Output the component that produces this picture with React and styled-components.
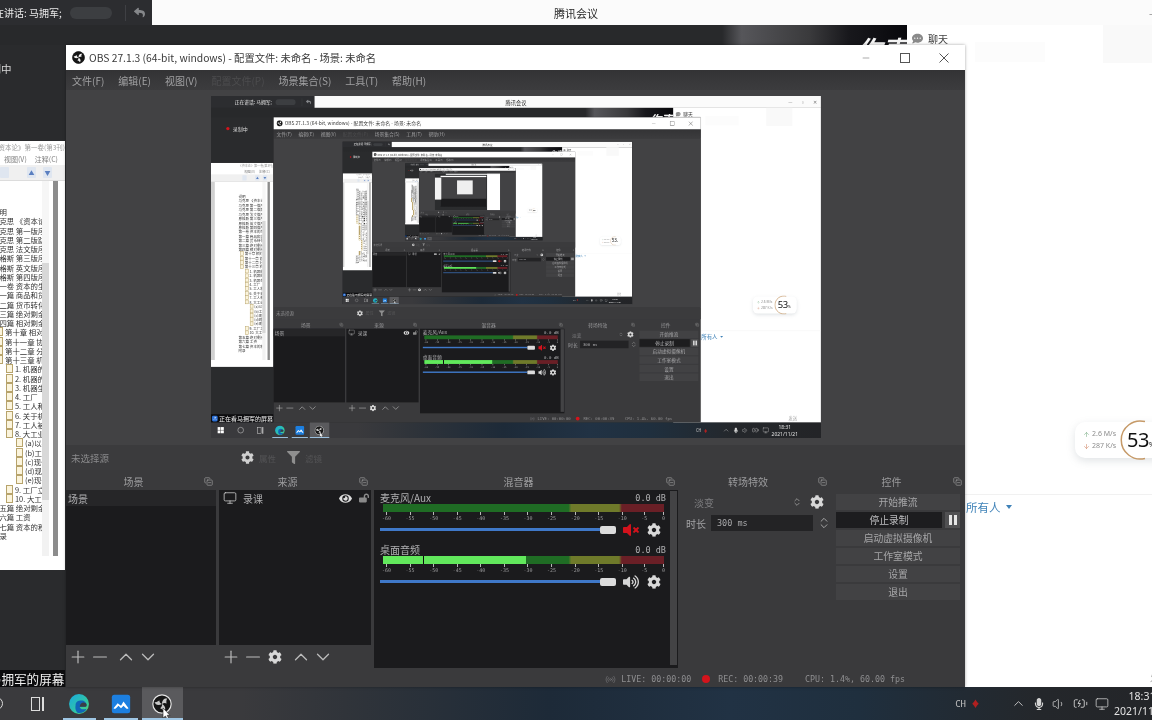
import React from "react";
import styled, { createGlobalStyle } from "styled-components";
import {
  FaCog,
  FaEye,
  FaLockOpen,
  FaVolumeUp,
  FaVolumeMute,
  FaCommentDots,
  FaFilter,
  FaReply,
  FaMicrophone,
} from "react-icons/fa";
import {
  Plus,
  Minus,
  ChevronUp,
  ChevronDown,
  Monitor,
  Volume1,
  BatteryCharging,
  CopyMinus,
  ArrowUp,
  ArrowDown,
  ChevronsUpDown,
  Radio,
  User,
} from "lucide-react";

const cjk = `"Noto Sans CJK SC", "Noto Sans", sans-serif`;
const MAX_DEPTH = 3;

const GlobalStyle = createGlobalStyle`
  html, body {
    margin: 0;
    background: #2b2c2e;
    overflow: hidden;
    font-family: ${cjk};
  }
`;

const Viewport = styled.div`
  width: 1152px;
  height: 720px;
  overflow: hidden;
`;

const Canvas = styled.div`
  position: relative;
  width: 1284px;
  height: 720px;
  display: flex;
  flex-direction: column;
  overflow: hidden;
  flex: none;
  background: #2b2c2e;
  margin-left: ${(p) => (p.$nested ? 0 : "-66px")};
  filter: blur(${(p) => (p.$nested ? "0.8px" : "0.6px")});
  transform: ${(p) => (p.$nested ? "scale(0.475)" : "none")};
  transform-origin: 0 0;
`;

/* meeting title row */
const TitleRow = styled.header`
  display: flex;
  height: 25px;
  flex: none;
`;
const MeetingBar = styled.div`
  width: 218px;
  display: flex;
  align-items: center;
  padding-left: 50px;
  box-sizing: border-box;
  background: #2c2d30;
  color: #e8e8e8;
  font-size: 10px;
  white-space: nowrap;
  overflow: hidden;
`;
const Ghost = styled.span`
  width: 42px;
  height: 12px;
  margin-left: 8px;
  border-radius: 6px;
  background: #3c3e41;
  flex: none;
`;
const BarDivider = styled.span`
  width: 1px;
  height: 16px;
  margin: 0 8px 0 13px;
  background: #3f4044;
  flex: none;
`;
const BackArrow = styled(FaReply)`
  color: #85878a;
  font-size: 11px;
  flex: none;
`;
const AppTitle = styled.div`
  position: relative;
  flex: 1;
  display: flex;
  align-items: center;
  justify-content: center;
  padding-right: 218px;
  background: #fbfbfb;
  color: #2a2a2a;
  font-size: 11px;
`;
const WinControls = styled.div`
  position: absolute;
  right: 8px;
  top: 0;
  height: 25px;
  display: flex;
  align-items: center;
  gap: 17px;
  color: #777;
  font-size: 10px;
`;

/* meeting main area */
const Main = styled.div`
  flex: 1;
  display: flex;
  min-height: 0;
`;
const Stage = styled.section`
  flex: 1;
  display: flex;
  flex-direction: column;
  background: #2a2b2d;
`;
const Stripe = styled.div`
  position: relative;
  height: 20px;
  overflow: hidden;
  background: linear-gradient(
    90deg,
    #28292b 0 81%,
    #56565a 83%,
    #4a4a4d 86%,
    #3a3a3c 90%,
    #18181c 94%,
    #08080c 100%
  );
`;
const SpeakerMark = styled.span`
  position: absolute;
  right: 0;
  top: 8px;
  color: #f4f4f4;
  font-size: 25px;
  line-height: 30px;
  font-style: italic;
  font-weight: 700;
`;
const RecordBadge = styled.div`
  display: flex;
  align-items: center;
  gap: 7px;
  margin: 16px 0 0 32px;
  color: #d8d8d8;
  font-size: 10.5px;
`;
const RedDot = styled.span`
  width: ${(p) => p.$size || 7}px;
  height: ${(p) => p.$size || 7}px;
  border-radius: 50%;
  background: #d4141c;
  flex: none;
`;

/* chat column */
const Chat = styled.aside`
  position: relative;
  width: 311px;
  display: flex;
  flex-direction: column;
  background: #fff;
`;
const ChatHeader = styled.div`
  position: relative;
  height: 40px;
  flex: none;
`;
const ChatTab = styled.div`
  display: inline-flex;
  align-items: center;
  gap: 5px;
  height: 19px;
  margin-left: 5px;
  padding: 0 2px 0 0;
  border-bottom: 1px solid #c8c8c8;
  color: #444;
  font-size: 10px;
  svg {
    color: #8a8a8a;
    font-size: 11px;
  }
`;
const HeaderGhost = styled.span`
  position: absolute;
  top: ${(p) => p.$top}px;
  left: ${(p) => p.$left}px;
  width: ${(p) => p.$width}px;
  height: ${(p) => p.$height}px;
  background: ${(p) => p.$fill};
`;
const ChatBody = styled.div`
  flex: 1;
`;
const Compose = styled.div`
  position: relative;
  height: 193px;
  flex: none;
  border-top: 1px solid #f1f1f1;
  padding: 2px 0 0 59px;
  box-sizing: border-box;
`;
const SendTarget = styled.div`
  color: #3f82b8;
  font-size: 11.5px;
  line-height: 20px;
  display: flex;
  align-items: center;
  gap: 5px;
`;
const Caret = styled.i`
  width: 0;
  height: 0;
  border: 3px solid transparent;
  border-top: 4px solid #3f82b8;
  border-bottom: 0;
`;
const SendHint = styled.span`
  position: absolute;
  right: 50px;
  bottom: 2px;
  color: #a9a9a9;
  font-size: 9px;
`;

/* floating net speed widget */
const SpeedWidget = styled.div`
  position: absolute;
  left: 168px;
  top: 397px;
  width: 92px;
  height: 36px;
  display: flex;
  align-items: center;
  border-radius: 10px;
  background: #fff;
  box-shadow: 0 3px 8px rgba(120, 130, 140, 0.22);
`;
const SpeedList = styled.div`
  width: 46px;
  padding-left: 8px;
  display: flex;
  flex-direction: column;
  gap: 2px;
  flex: none;
`;
const SpeedLine = styled.div`
  display: flex;
  align-items: center;
  gap: 2px;
  color: #8d8d8d;
  font-family: "Noto Sans", sans-serif;
  font-size: 7px;
  line-height: 10px;
  white-space: nowrap;
  svg {
    color: ${(p) => p.$tone};
  }
`;
const Gauge = styled.div`
  position: relative;
  width: 40px;
  height: 40px;
  margin-left: -9px;
  flex: none;
`;
const GaugeValue = styled.span`
  position: absolute;
  left: 7px;
  top: 0;
  color: #111;
  font-family: "Noto Sans", sans-serif;
  font-size: 20px;
  line-height: 39px;
  letter-spacing: -0.5px;
  small {
    font-size: 7px;
  }
`;

/* pdf reader window */
const PdfWindow = styled.div`
  position: absolute;
  left: 0;
  top: 141px;
  width: 131px;
  height: 429px;
  display: flex;
  flex-direction: column;
  background: #fff;
  overflow: hidden;
`;
const PdfTitle = styled.div`
  height: 13px;
  padding-left: 66px;
  color: #9a9a9a;
  font-size: 6.5px;
  line-height: 13px;
  white-space: nowrap;
  margin-left: -8px;
`;
const PdfMenu = styled.div`
  height: 11px;
  padding-left: 70px;
  display: flex;
  gap: 8px;
  color: #808080;
  font-size: 7px;
  line-height: 11px;
  white-space: nowrap;
`;
const PdfTools = styled.div`
  height: 15px;
  padding-left: 66px;
  display: flex;
  align-items: center;
  gap: 7px;
  background: #f0f0f0;
  border-bottom: 1px solid #dcdcdc;
`;
const ToolKey = styled.span`
  width: 9px;
  height: 11px;
  display: flex;
  align-items: center;
  justify-content: center;
  border-radius: 1px;
  background: #dfe6f0;
  color: #5a7fc0;
  font-size: 6px;
  &:nth-child(2) {
    margin-left: 11px;
  }
`;
const PdfBody = styled.div`
  flex: 1;
  display: flex;
  min-height: 0;
`;
const ThumbRail = styled.div`
  width: 8px;
  background: #d0d0d0;
  flex: none;
`;
const Tree = styled.div`
  flex: 1;
  min-width: 0;
  padding-top: 26px;
  overflow: hidden;
`;
const TreeRow = styled.div`
  display: flex;
  align-items: center;
  gap: 2px;
  height: 9.25px;
  padding-left: ${(p) => p.$indent - 8}px;
  color: #333;
  font-size: 7.4px;
  line-height: 9px;
  white-space: nowrap;
`;
const DocIcon = styled.i`
  width: 5px;
  height: 7px;
  border: 1px solid #b7a36b;
  background: #fbf4dc;
  flex: none;
`;
const TreeBar = styled.div`
  width: 7px;
  background: linear-gradient(180deg, #f6f6f6 0 22%, #d8d8d8 22% 85%, #f2f2f2 85%);
  flex: none;
`;
const PdfEdge = styled.div`
  width: 5px;
  margin-left: 4px;
  background: #8c8c8c;
  border-right: 7px solid #fff;
  flex: none;
`;
const PdfFoot = styled.div`
  height: 14px;
  background: #fff;
`;

/* obs window */
const ObsWindow = styled.div`
  position: absolute;
  left: 132px;
  top: 45px;
  width: 899px;
  height: 642px;
  display: flex;
  flex-direction: column;
  background: #3a3a3c;
  box-shadow: 0 0 3px rgba(0, 0, 0, 0.35);
`;
const ObsTitle = styled.div`
  position: relative;
  height: 25px;
  flex: none;
  display: flex;
  align-items: center;
  gap: 4px;
  padding-left: 6px;
  background: #fff;
  color: #3a3a3a;
  font-size: 10.3px;
  white-space: nowrap;
`;
const ObsControls = styled.div`
  position: absolute;
  right: 16px;
  top: 0;
  height: 25px;
  display: flex;
  align-items: center;
  gap: 29px;
  color: #555;
  svg {
    display: block;
  }
`;
const MenuBar = styled.nav`
  height: 20px;
  flex: none;
  display: flex;
  align-items: center;
  gap: 14px;
  padding-left: 6px;
  background: linear-gradient(180deg, #333335, #3c3c3e);
  font-size: 10px;
`;
const MenuItem = styled.span`
  color: ${(p) => (p.$dim ? "#4c4c4e" : "#a0a0a2")};
  white-space: nowrap;
`;
const PreviewArea = styled.div`
  flex: 1;
  min-height: 0;
  display: flex;
  align-items: center;
  justify-content: center;
  padding-bottom: 1px;
  background: #424244;
`;
const PreviewFrame = styled.div`
  width: 610px;
  height: 342px;
  overflow: hidden;
  background: #2b2c2e;
`;
/* innermost repeat of the preview, too small for readable parts */
const DeepFrame = styled.div`
  width: 100%;
  height: 100%;
  background:
    linear-gradient(#fbfbfb, #fbfbfb) 100% 0 / 83% 3.5% no-repeat,
    linear-gradient(#fff, #fff) 100% 0 / 20% 100% no-repeat,
    linear-gradient(#f2f2f2, #f2f2f2) 0 28% / 10% 60% no-repeat,
    linear-gradient(#fff, #fff) 30% 6.5% / 70% 3.5% no-repeat,
    linear-gradient(#1b1b1d, #1b1b1d) 30% 88% / 70% 22% no-repeat,
    linear-gradient(#efefef, #efefef) 45% 30% / 24% 38% no-repeat,
    linear-gradient(#424244, #424244) 30% 40% / 70% 80% no-repeat,
    #2b2c2e;
`;
const FilterBar = styled.div`
  height: 25px;
  flex: none;
  display: flex;
  align-items: center;
  padding-left: 5px;
  background: #3b3b3d;
  color: #8a8a8c;
  font-size: 9.5px;
`;
const NoSource = styled.span`
  width: 170px;
  flex: none;
`;
const FilterAction = styled.span`
  display: flex;
  align-items: center;
  gap: 5px;
  width: 46px;
  color: #545456;
  font-size: 8.5px;
  svg {
    color: ${(p) => p.$icon};
    font-size: 13px;
  }
`;

const Docks = styled.div`
  height: 194px;
  margin-top: 4px;
  flex: none;
  display: grid;
  grid-template-columns: 150px 152px 304px 149px 132px;
  gap: 3px;
`;
const Dock = styled.div`
  display: flex;
  flex-direction: column;
  min-width: 0;
`;
const DockHead = styled.div`
  position: relative;
  height: 16px;
  flex: none;
  padding-right: 15px;
  text-align: center;
  color: #9b9b9d;
  font-size: 10px;
  line-height: 15px;
  svg {
    position: absolute;
    right: 3px;
    top: 3px;
    color: #a8a8a8;
  }
`;
const ListBody = styled.div`
  flex: 1;
  background: #1b1b1d;
  min-height: 0;
`;
const ListRow = styled.div`
  height: 16px;
  display: flex;
  align-items: center;
  gap: 6px;
  padding: 0 2px 0 ${(p) => (p.$active ? 2 : 4)}px;
  background: ${(p) => (p.$active ? "#262628" : "transparent")};
  color: #adadaf;
  font-size: 10px;
`;
const RowIcons = styled.span`
  margin-left: auto;
  display: flex;
  align-items: center;
  gap: 7px;
  color: #dcdcdc;
  font-size: 13px;
`;
const LockIcon = styled(FaLockOpen)`
  color: #8a8a8a;
  font-size: 10px;
`;
const DockTools = styled.div`
  height: 23px;
  flex: none;
  display: flex;
  align-items: center;
  padding-left: 1px;
  color: #bcbcbc;
`;
const ToolSlot = styled.span`
  width: 22px;
  display: flex;
  align-items: center;
  justify-content: center;
  margin-left: ${(p) => p.$push || 0}px;
  flex: none;
`;
const MixerBody = styled.div`
  flex: 1;
  display: flex;
  background: #1b1b1d;
  padding: 1px 1px 3px 6px;
  min-height: 0;
`;
const MixerList = styled.div`
  flex: 1;
  min-width: 0;
`;
const MixerScroll = styled.div`
  width: 7px;
  margin-left: 4px;
  background: #434345;
  flex: none;
`;
const Strip = styled.div`
  height: 52px;
`;
const StripHead = styled.div`
  height: 13px;
  display: flex;
  align-items: center;
  justify-content: space-between;
  color: #b0b0b2;
  font-size: 10px;
`;
const DbValue = styled.span`
  font-family: "DejaVu Sans Mono", monospace;
  font-size: 8.5px;
`;
const Meter = styled.div`
  position: relative;
  height: 8px;
  margin: 0 2px 0 3px;
  background: linear-gradient(
    90deg,
    #1f6c24 0 66%,
    #6f7a2a 67% 84%,
    #6a1f26 85% 100%
  );
  overflow: hidden;
`;
const MeterLevel = styled.div`
  height: 100%;
  width: ${(p) => p.$level}%;
  background: linear-gradient(90deg, #62e85c 0 28%, #0a0a0a 28% 29%, #62e85c 29%);
`;
const Ticks = styled.div`
  height: 9px;
  display: flex;
  justify-content: space-between;
  margin: 0 1px 0 2px;
  color: #9a9a9c;
  font-family: "DejaVu Sans Mono", monospace;
  font-size: 5px;
  line-height: 6px;
  span {
    display: flex;
    flex-direction: column;
    align-items: center;
  }
  span::before {
    content: "";
    width: 1px;
    height: 3px;
    background: #b8b8b8;
  }
`;
const SliderRow = styled.div`
  height: 17px;
  display: flex;
  align-items: center;
`;
const SliderTrack = styled.div`
  width: 220px;
  height: 3px;
  background: #3f78c8;
  flex: none;
`;
const SliderKnob = styled.div`
  width: 16px;
  height: 8px;
  border-radius: 2px;
  background: #dcdcdc;
  flex: none;
`;
const MuteIcon = styled.span`
  width: 24px;
  margin: 0 4px 0 3px;
  display: flex;
  justify-content: center;
  color: ${(p) => (p.$muted ? "#d3121c" : "#d6d6d6")};
  font-size: 16px;
`;
const GearIcon = styled(FaCog)`
  color: #d8d8d8;
  font-size: ${(p) => p.$size || 13}px;
  flex: none;
`;
const TransBody = styled.div`
  padding: 3px 0 0 5px;
  color: #a2a2a4;
  font-size: 10px;
`;
const TransRow = styled.div`
  height: 18px;
  display: flex;
  align-items: center;
  margin-bottom: 3px;
  white-space: nowrap;
  svg {
    flex: none;
  }
`;
const TransName = styled.span`
  margin-left: 8px;
  width: 98px;
  color: #7e7e80;
`;
const TransSpin = styled(ChevronsUpDown)`
  color: #9c9c9c;
  margin-right: 8px;
`;
const DurationBox = styled.span`
  width: 102px;
  height: 16px;
  margin: 0 4px 0 5px;
  padding-left: 6px;
  box-sizing: border-box;
  background: #232325;
  color: #a8a8aa;
  font-family: "DejaVu Sans Mono", monospace;
  font-size: 8.5px;
  line-height: 16px;
  flex: none;
`;
const ControlBody = styled.div`
  padding: 4px 5px 0 3px;
  display: flex;
  flex-direction: column;
  gap: 2px;
`;
const ControlRow = styled.div`
  display: flex;
  gap: 3px;
`;
const ControlButton = styled.div`
  flex: 1;
  height: 16px;
  text-align: center;
  background: ${(p) => (p.$on ? "#1d1d1f" : "#424244")};
  color: ${(p) => (p.$on ? "#bdbdbf" : "#a6a6a8")};
  font-size: 9.8px;
  line-height: 16px;
`;
const PauseButton = styled.div`
  width: 15px;
  height: 16px;
  display: flex;
  justify-content: center;
  gap: 2px;
  padding-top: 3px;
  box-sizing: border-box;
  background: #505052;
  i {
    width: 3px;
    height: 10px;
    background: #e4e4e4;
  }
`;
const StatusBar = styled.footer`
  height: 19px;
  flex: none;
  display: flex;
  align-items: center;
  justify-content: flex-end;
  padding: 3px 60px 0 0;
  box-sizing: border-box;
  color: #8e8e90;
  font-family: "DejaVu Sans Mono", monospace;
  font-size: 8.3px;
  white-space: nowrap;
`;
const StatusItem = styled.span`
  display: flex;
  align-items: center;
  gap: ${(p) => p.$gap || 0}px;
  margin-left: ${(p) => p.$left || 0}px;
  svg {
    color: #77777a;
  }
`;

/* caption over the stage */
const ScreenCaption = styled.div`
  position: absolute;
  left: 0;
  top: 670px;
  width: 131px;
  height: 17px;
  display: flex;
  align-items: center;
  background: #0c0c0e;
  color: #f0f0f0;
  font-size: 12.6px;
  white-space: nowrap;
`;
const CaptionAvatar = styled.span`
  width: 12px;
  height: 12px;
  margin: 0 3px 0 2px;
  display: flex;
  align-items: center;
  justify-content: center;
  border-radius: 3px;
  background: #2a6fd6;
  color: #fff;
  flex: none;
`;

/* windows taskbar */
const Taskbar = styled.footer`
  height: 33px;
  flex: none;
  display: flex;
  align-items: center;
  background: linear-gradient(
    90deg,
    #3a3a3d 0 24%,
    #30343a 32%,
    #1d2a38 48%,
    #213244 62%,
    #1f2f3e 72%,
    #24272b 86%,
    #232427 100%
  );
`;
const TaskCell = styled.div`
  position: relative;
  width: 41.5px;
  height: 33px;
  display: flex;
  align-items: center;
  justify-content: center;
  background: ${(p) => (p.$current ? "#5a5a5d" : "transparent")};
  color: #dcdcdc;
  flex: none;
  &::after {
    content: "";
    display: ${(p) => (p.$running ? "block" : "none")};
    position: absolute;
    left: ${(p) => (p.$current ? 0 : 4)}px;
    right: ${(p) => (p.$current ? 0 : 4)}px;
    bottom: 0;
    height: 2px;
    background: #9fc6e4;
  }
`;
const Pointer = styled.svg`
  position: absolute;
  left: 20px;
  top: 21px;
`;
const StartLogo = styled.span`
  width: 13px;
  height: 13px;
  display: grid;
  grid-template-columns: 1fr 1fr;
  gap: 1px;
  i {
    background: #fff;
  }
`;
const SearchRing = styled.span`
  width: 11px;
  height: 11px;
  border: 1px solid #ddd;
  border-radius: 50%;
`;
const TaskView = styled.span`
  display: flex;
  gap: 2px;
  align-items: stretch;
  height: 14px;
  i {
    width: 9px;
    border: 1.5px solid #ddd;
    box-sizing: border-box;
  }
  b {
    width: 2px;
    background: #ddd;
  }
`;
const Tray = styled.div`
  margin-left: auto;
  display: flex;
  align-items: center;
  color: #d4d4d4;
  padding-right: 43px;
`;
const TrayLang = styled.span`
  font-family: "DejaVu Sans Mono", monospace;
  font-size: 9px;
  color: #bdbdbd;
`;
const TrayRed = styled.span`
  margin: 0 31px 0 5px;
  color: #b02020;
  font-size: 9px;
`;
const TrayIcons = styled.span`
  display: flex;
  align-items: center;
  gap: 7px;
`;
const Clock = styled.div`
  width: 66px;
  text-align: center;
  color: #e2e2e2;
  font-family: "Noto Sans", sans-serif;
  font-size: 10.5px;
  line-height: 15px;
  flex: none;
`;

const treeRows = [
  { indent: 58, text: "说明" },
  { indent: 58, text: "马克思 《资本论》" },
  { indent: 58, text: "马克思 第一版序言" },
  { indent: 58, text: "马克思 第二版跋" },
  { indent: 58, text: "马克思 法文版序言" },
  { indent: 58, text: "恩格斯 第三版序言" },
  { indent: 58, text: "恩格斯 英文版序言" },
  { indent: 58, text: "恩格斯 第四版序言" },
  { indent: 58, text: "第一卷 资本的生产过程" },
  { indent: 58, text: "第一篇 商品和货币" },
  { indent: 58, text: "第二篇 货币转化为资本" },
  { indent: 58, text: "第三篇 绝对剩余价值" },
  { indent: 58, text: "第四篇 相对剩余价值" },
  { indent: 62, doc: true, text: "第十章 相对剩余" },
  { indent: 62, doc: true, text: "第十一章 协作" },
  { indent: 62, doc: true, text: "第十二章 分工" },
  { indent: 62, doc: true, text: "第十三章 机器" },
  { indent: 72, doc: true, text: "1. 机器的发展" },
  { indent: 72, doc: true, text: "2. 机器的价值" },
  { indent: 72, doc: true, text: "3. 机器生产" },
  { indent: 72, doc: true, text: "4. 工厂" },
  { indent: 72, doc: true, text: "5. 工人和机器" },
  { indent: 72, doc: true, text: "6. 关于机器" },
  { indent: 72, doc: true, text: "7. 工人被排斥" },
  { indent: 72, doc: true, text: "8. 大工业" },
  { indent: 82, doc: true, text: "(a)以手工业" },
  { indent: 82, doc: true, text: "(b)工厂制度" },
  { indent: 82, doc: true, text: "(c)现代工场" },
  { indent: 82, doc: true, text: "(d)现代家庭" },
  { indent: 82, doc: true, text: "(e)现代工场" },
  { indent: 72, doc: true, text: "9. 工厂立法" },
  { indent: 72, doc: true, text: "10. 大工业" },
  { indent: 58, text: "第五篇 绝对剩余价值" },
  { indent: 58, text: "第六篇 工资" },
  { indent: 58, text: "第七篇 资本的积累" },
  { indent: 58, text: "附录" },
];

const meterLabels = [-60, -55, -50, -45, -40, -35, -30, -25, -20, -15, -10, -5, 0];

function ObsLogo({ size = 13, outlined }) {
  const arm = "M12 12 C12 7 15 4.5 18.5 5.500 C17 7 17 9.500 17.500 11.500 C16 10.500 14 10.500 12 12 Z";
  return (
    <svg width={size} height={size} viewBox="0 0 24 24">
      <circle cx="12" cy="12" r="11" fill="#161616" stroke={outlined ? "#e6e6e6" : "#161616"} strokeWidth="1.4" />
      {[0, 120, 240].map((angle) => (
        <path key={angle} d={arm} fill={outlined ? "#c8c8c8" : "#f0f0f0"} transform={`rotate(${angle} 12 12)`} />
      ))}
    </svg>
  );
}

function EdgeLogo() {
  return (
    <svg width="22" height="22" viewBox="0 0 32 32">
      <defs>
        <linearGradient id="edgeShell" x1="0" y1="0" x2="1" y2="1">
          <stop offset="0" stopColor="#19a8e0" />
          <stop offset="0.6" stopColor="#30c5a6" />
          <stop offset="1" stopColor="#5ad66a" />
        </linearGradient>
      </defs>
      <circle cx="16" cy="16" r="14.5" fill="url(#edgeShell)" />
      <path d="M11 18c0-5 4-7 8-7 5 0 8 3 8 7 0 1-1 2-3 2H17c0 3 4 5 10 3-2 5-8 7-12 6-3-1-5-6-4-11z" fill="#1166b8" />
      <path d="M17 20h7c2 0 3-1 3-2 0-1 0-2-1-3-3-2-8-2-9 5z" fill="#3a3f45" />
    </svg>
  );
}

function MeetingLogo() {
  return (
    <svg width="20" height="20" viewBox="0 0 24 24">
      <rect x="1" y="1" width="22" height="22" rx="3" fill="#1c7fe0" />
      <path d="M3 17l5-6 4 3 3-5 6 8c-1 1-2 1-3 0l-3-3-3 3-3-3-3 3c-1 1-2 1-3 0z" fill="#fff" />
    </svg>
  );
}

function DockCorner() {
  return <CopyMinus size={9} strokeWidth={1.6} />;
}

function AudioStrip({ name, level, muted }) {
  return (
    <Strip>
      <StripHead>
        <span>{name}</span>
        <DbValue>0.0 dB</DbValue>
      </StripHead>
      <Meter>
        <MeterLevel $level={level} />
      </Meter>
      <Ticks>
        {meterLabels.map((label) => (
          <span key={label}>{label}</span>
        ))}
      </Ticks>
      <SliderRow>
        <SliderTrack />
        <SliderKnob />
        <MuteIcon $muted={muted}>{muted ? <FaVolumeMute /> : <FaVolumeUp />}</MuteIcon>
        <GearIcon $size={14} />
      </SliderRow>
    </Strip>
  );
}

function ListTools({ gear }) {
  return (
    <DockTools>
      <ToolSlot>
        <Plus size={20} strokeWidth={1.4} />
      </ToolSlot>
      <ToolSlot>
        <Minus size={24} strokeWidth={1.3} />
      </ToolSlot>
      {gear ? (
        <ToolSlot>
          <GearIcon $size={14} />
        </ToolSlot>
      ) : null}
      <ToolSlot $push={4}>
        <ChevronUp size={26} strokeWidth={1.4} />
      </ToolSlot>
      <ToolSlot>
        <ChevronDown size={26} strokeWidth={1.4} />
      </ToolSlot>
    </DockTools>
  );
}

function ObsStudio({ depth }) {
  return (
    <ObsWindow>
      <ObsTitle>
        <ObsLogo size={13} />
        <span>OBS 27.1.3 (64-bit, windows) - 配置文件: 未命名 - 场景: 未命名</span>
        <ObsControls>
          <Minus size={10} strokeWidth={1.2} />
          <svg width="10" height="10" viewBox="0 0 10 10">
            <rect x="0.5" y="0.5" width="9" height="9" fill="none" stroke="currentColor" />
          </svg>
          <svg width="10" height="10" viewBox="0 0 10 10">
            <path d="M.5.5l9 9M9.500.5l-9 9" fill="none" stroke="currentColor" />
          </svg>
        </ObsControls>
      </ObsTitle>
      <MenuBar>
        <MenuItem>文件(F)</MenuItem>
        <MenuItem>编辑(E)</MenuItem>
        <MenuItem>视图(V)</MenuItem>
        <MenuItem $dim>配置文件(P)</MenuItem>
        <MenuItem>场景集合(S)</MenuItem>
        <MenuItem>工具(T)</MenuItem>
        <MenuItem>帮助(H)</MenuItem>
      </MenuBar>
      <PreviewArea>
        <PreviewFrame>{depth < MAX_DEPTH ? <Screen depth={depth + 1} /> : <DeepFrame />}</PreviewFrame>
      </PreviewArea>
      <FilterBar>
        <NoSource>未选择源</NoSource>
        <FilterAction $icon="#d0d0d0">
          <FaCog />
          属性
        </FilterAction>
        <FilterAction $icon="#8f8f8f">
          <FaFilter />
          滤镜
        </FilterAction>
      </FilterBar>
      <Docks>
        <Dock>
          <DockHead>
            场景
            <DockCorner />
          </DockHead>
          <ListBody>
            <ListRow $active>场景</ListRow>
          </ListBody>
          <ListTools />
        </Dock>
        <Dock>
          <DockHead>
            来源
            <DockCorner />
          </DockHead>
          <ListBody>
            <ListRow>
              <Monitor size={14} strokeWidth={1.4} color="#c8c8c8" />
              录课
              <RowIcons>
                <FaEye />
                <LockIcon />
              </RowIcons>
            </ListRow>
          </ListBody>
          <ListTools gear />
        </Dock>
        <Dock>
          <DockHead>
            混音器
            <DockCorner />
          </DockHead>
          <MixerBody>
            <MixerList>
              <AudioStrip name="麦克风/Aux" level={0} muted />
              <AudioStrip name="桌面音频" level={51} />
            </MixerList>
            <MixerScroll />
          </MixerBody>
        </Dock>
        <Dock>
          <DockHead>
            转场特效
            <DockCorner />
          </DockHead>
          <TransBody>
            <TransRow>
              <TransName>淡变</TransName>
              <TransSpin size={10} />
              <GearIcon $size={14} />
            </TransRow>
            <TransRow>
              时长
              <DurationBox>300 ms</DurationBox>
              <ChevronsUpDown size={14} strokeWidth={1.4} color="#bcbcbc" />
            </TransRow>
          </TransBody>
        </Dock>
        <Dock>
          <DockHead>
            控件
            <DockCorner />
          </DockHead>
          <ControlBody>
            <ControlButton>开始推流</ControlButton>
            <ControlRow>
              <ControlButton $on>停止录制</ControlButton>
              <PauseButton>
                <i />
                <i />
              </PauseButton>
            </ControlRow>
            <ControlButton>启动虚拟摄像机</ControlButton>
            <ControlButton>工作室模式</ControlButton>
            <ControlButton>设置</ControlButton>
            <ControlButton>退出</ControlButton>
          </ControlBody>
        </Dock>
      </Docks>
      <StatusBar>
        <StatusItem $gap={5}>
          <Radio size={11} strokeWidth={1.4} />
          LIVE: 00:00:00
        </StatusItem>
        <StatusItem $gap={8} $left={11}>
          <RedDot $size={8} />
          REC: 00:00:39
        </StatusItem>
        <StatusItem $left={22}>CPU: 1.4%, 60.00 fps</StatusItem>
      </StatusBar>
    </ObsWindow>
  );
}

function Screen({ depth }) {
  return (
    <Canvas $nested={depth > 0}>
      <TitleRow>
        <MeetingBar>
          正在讲话: 马拥军;
          <Ghost />
          <BarDivider />
          <BackArrow />
        </MeetingBar>
        <AppTitle>
          腾讯会议
          <WinControls>
            <span>—</span>
            <span>▫</span>
            <span>✕</span>
          </WinControls>
        </AppTitle>
      </TitleRow>
      <Main>
        <Stage>
          <Stripe>
            <SpeakerMark>你声</SpeakerMark>
          </Stripe>
          <RecordBadge>
            <RedDot />
            录制中
          </RecordBadge>
        </Stage>
        <Chat>
          <ChatHeader>
            <HeaderGhost $top={17} $left={68} $width={70} $height={20} $fill="#fcfcfc" />
            <HeaderGhost $top={0} $left={196} $width={55} $height={38} $fill="#f9f9f9" />
            <ChatTab>
              <FaCommentDots />
              聊天
            </ChatTab>
          </ChatHeader>
          <ChatBody />
          <Compose>
            <SendTarget>
              所有人
              <Caret />
            </SendTarget>
            <SendHint>发送</SendHint>
          </Compose>
          <SpeedWidget>
            <SpeedList>
              <SpeedLine $tone="#7fb08a">
                <ArrowUp size={7} />
                2.6 M/s
              </SpeedLine>
              <SpeedLine $tone="#d08a6a">
                <ArrowDown size={7} />
                287 K/s
              </SpeedLine>
            </SpeedList>
            <Gauge>
              <svg width="40" height="40" viewBox="0 0 40 40">
                <path d="M25 1.600A19 19 0 1 0 25 38.400" fill="none" stroke="#c69a68" strokeWidth="1.5" />
              </svg>
              <GaugeValue>
                53<small>%</small>
              </GaugeValue>
            </Gauge>
          </SpeedWidget>
        </Chat>
      </Main>
      <Taskbar>
        <TaskCell>
          <StartLogo>
            <i />
            <i />
            <i />
            <i />
          </StartLogo>
        </TaskCell>
        <TaskCell>
          <SearchRing />
        </TaskCell>
        <TaskCell>
          <TaskView>
            <i />
            <b />
          </TaskView>
        </TaskCell>
        <TaskCell $running>
          <EdgeLogo />
        </TaskCell>
        <TaskCell $running>
          <MeetingLogo />
        </TaskCell>
        <TaskCell $running $current>
          <ObsLogo size={20} outlined />
          <Pointer width="9" height="13" viewBox="0 0 9 13">
            <path d="M1 0v10l2.500-2 1.800 4 1.700-.8-1.800-3.900H8z" fill="#fff" stroke="#222" strokeWidth="0.6" />
          </Pointer>
        </TaskCell>
        <Tray>
          <TrayLang>CH</TrayLang>
          <TrayRed>♦</TrayRed>
          <TrayIcons>
            <ChevronUp size={15} strokeWidth={1.4} />
            <FaMicrophone size={12} />
            <Volume1 size={14} strokeWidth={1.3} />
            <BatteryCharging size={15} strokeWidth={1.4} />
            <Monitor size={14} strokeWidth={1.3} />
          </TrayIcons>
          <Clock>
            18:31
            <br />
            2021/11/21
          </Clock>
        </Tray>
      </Taskbar>
      <PdfWindow>
        <PdfTitle>《资本论》第一卷(第3刊).pdf</PdfTitle>
        <PdfMenu>
          <span>视图(V)</span>
          <span>注释(C)</span>
        </PdfMenu>
        <PdfTools>
          <ToolKey />
          <ToolKey>▲</ToolKey>
          <ToolKey>▼</ToolKey>
        </PdfTools>
        <PdfBody>
          <ThumbRail />
          <Tree>
            {treeRows.map((row) => (
              <TreeRow key={row.text} $indent={row.indent}>
                {row.doc ? <DocIcon /> : null}
                {row.text}
              </TreeRow>
            ))}
          </Tree>
          <TreeBar />
          <PdfEdge />
        </PdfBody>
        <PdfFoot />
      </PdfWindow>
      <ObsStudio depth={depth} />
      <ScreenCaption>
        <CaptionAvatar>
          <User size={9} />
        </CaptionAvatar>
        正在看马拥军的屏幕
      </ScreenCaption>
    </Canvas>
  );
}

export default function App() {
  return (
    <>
      <GlobalStyle />
      <Viewport>
        <Screen depth={0} />
      </Viewport>
    </>
  );
}
